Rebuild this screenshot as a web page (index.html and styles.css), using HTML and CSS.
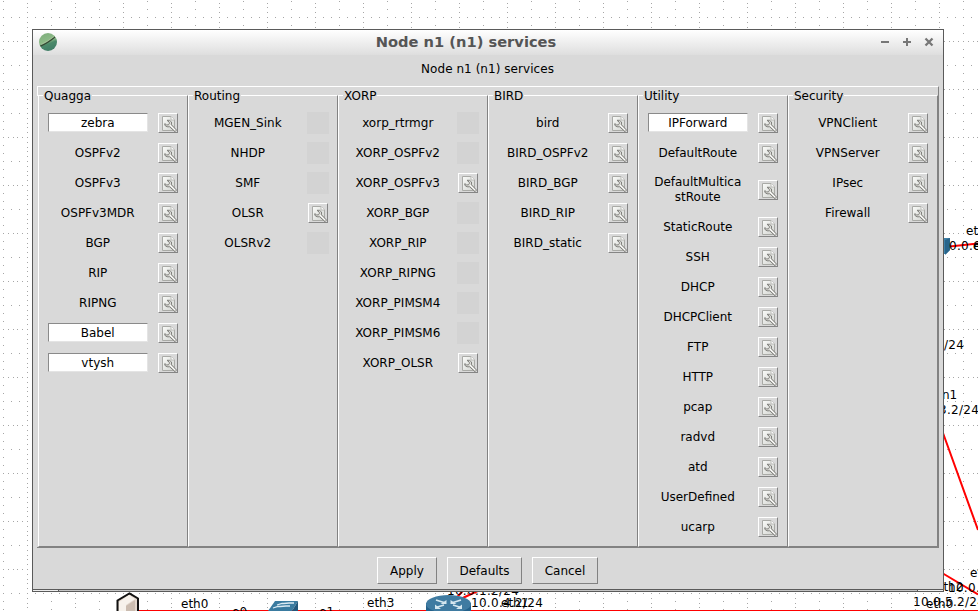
FILE: index.html
```html
<!DOCTYPE html>
<html lang="en">
<head>
<meta charset="utf-8">
<title>Node n1 (n1) services</title>
<link rel="stylesheet" href="styles.css">
</head>
<body>
<svg class="canvas" width="978" height="611" viewBox="0 0 978 611">
  <defs>
    <pattern id="grid" x="3" y="17" width="48" height="48" patternUnits="userSpaceOnUse">
      <path shape-rendering="crispEdges" stroke="#a6a6a6" fill="none" d="M0 .5h1m7 0h1m7 0h1m7 0h1m7 0h1m7 0h1M0 24.5h1m4 0h1m4 0h1m3 0h1m4 0h1m4 0h1m4 0h1m4 0h1m3 0h1m4 0h1M.5 8v1m0 7v1m0 15v1m0 7v1M24.5 5v1m0 4v1m0 3v1m0 4v1m0 9v1m0 4v1m0 3v1m0 4v1"/>
    </pattern>
    <linearGradient id="marble" x1=".3" y1="0" x2=".7" y2="1"><stop offset="0" stop-color="#7fae7c"/><stop offset=".45" stop-color="#8dbb88"/><stop offset=".6" stop-color="#4b8a6a"/><stop offset="1" stop-color="#3f7c66"/></linearGradient>
    <linearGradient id="paper" x1="0" y1="0" x2="1" y2="1"><stop offset="0" stop-color="#fafbf9"/><stop offset="1" stop-color="#d2d4d0"/></linearGradient>
    <symbol id="wrench" viewBox="0 0 16 16">
      <path d="M1.500 .5h8.500l3.500 3.500v10.500h-12z" fill="url(#paper)" stroke="#a9aaa6"/>
      <path d="M10 .5v3.500h3.500" fill="#fff" stroke="#b8b8b4"/>
      <path d="M6 4.300h2.500l2 1.700v2.800l5 5.200-1.500 1.700-5.300-4.900H6L3.800 9.300V7.600l1.700 1.300h1.700L8.300 7.800V6.200z" fill="#dcdcd8" stroke="#80807c"/>
      <path d="M9 9l5.200 5.200" stroke="#fff"/>
    </symbol>
  </defs>
  <rect width="978" height="611" fill="url(#grid)"/>
  <g class="links">
    <path d="M943 433L978 530M943 573.500L978 594.500M945 247L978 243.500M452 603L482 589M452 603L468 585" stroke-width="2"/>
    <path d="M128 610.500H978" stroke-width="1"/>
  </g>
  <path d="M117.500 611V600.500L129.500 593.500l8.500 5V611" fill="#e2d6cc" stroke="#111" stroke-width="2"/>
  <path d="M119 602l10-7 6 4-9 6v6h-7z" fill="#f7f2ec"/>
  <path d="M126 606l9-6v11h-9z" fill="#cbbcb0"/>
  <path d="M268 611l7-10h23l-6 10z" fill="#3a7ba0"/>
  <path d="M292 611l6-10v10z" fill="#22587c"/>
  <path d="M277 605l5-1.500h4m-2 0l5-.5h5m-21 5l5-1.500h4m-2 0l6-.5h4" fill="none" stroke="#dcebf3" stroke-width="1.300"/>
  <path d="M426 603v8h45v-8z" fill="#24618a"/>
  <ellipse cx="448.500" cy="604" rx="22.500" ry="9" fill="#3f7ba1"/>
  <path d="M436 600l8 2.500m17-2.500l-8 2.500M436 607.500l8-2.500m17 2.500l-8-2.500" fill="none" stroke="#d5e7ef" stroke-width="1.800"/>
  <path d="M446.500 600v4h-6zM450.500 600v4h6zM435 604.500v4.500h6zM462 604.500v4.500h-6z" fill="#d5e7ef"/>
  <path d="M935 238h15v12l-4 4h-11z" fill="#3f82a9"/>
  <path d="M945 240l5-2v12l-5 5z" fill="#28658b"/>
  <g class="names">
    <text x="181" y="608">eth0</text>
    <text x="232" y="616">e0</text>
    <text x="319" y="616">e1</text>
    <text x="367" y="607">eth3</text>
    <text x="501" y="607">eth1</text>
    <text x="966" y="235">eth1</text>
    <text x="973" y="250">eth0</text>
    <text x="942" y="399">n1</text>
    <text x="970" y="577">eth1</text>
    <text x="936" y="591">eth2</text>
    <text x="926" y="608">eth0</text>
  </g>
  <g class="names addresses">
    <text x="447" y="595">10.0.1.2/24</text>
    <text x="471" y="607">10.0.4.2/24</text>
    <text x="949" y="250">0.0.6.2/24</text>
    <text x="892" y="349">10.0.3.1/24</text>
    <text x="907" y="414">10.0.3.2/24</text>
    <text x="948" y="592">10.0.7.1/24</text>
    <text x="913" y="606">10.0.5.2/24</text>
  </g>
</svg>

<main class="window">
  <header class="titlebar">
    <svg class="app-icon" width="18" height="18" viewBox="0 0 18 18"><circle cx="9" cy="9" r="9" fill="url(#marble)"/><path d="M1.500 13Q8 10.500 16 4" fill="none" stroke="#354b35" stroke-width="1.600"/><path d="M2 11.500Q8 9 15 3.500" fill="none" stroke="#b2c4a0" stroke-width=".7"/></svg>
    <h1>Node n1 (n1) services</h1>
    <svg class="controls" width="54" height="10" viewBox="0 0 54 10" fill="none" stroke="#777" stroke-width="2"><path d="M1 5h8M23 5h8M27 1v8"/><path d="M45.500 1.500l7 7m0-7l-7 7" stroke-width="2.300"/></svg>
  </header>
  <p class="subtitle">Node n1 (n1) services</p>
  <div class="panel" id="panel"></div>
  <footer class="actions">
    <button class="apply">Apply</button>
    <button class="defaults">Defaults</button>
    <button class="cancel">Cancel</button>
  </footer>
  <div class="grip"></div>
</main>
<script src="services.js"></script>
</body>
</html>
```
FILE: styles.css
```css
* { box-sizing: border-box; }
body {
  margin: 0;
  width: 978px;
  height: 611px;
  overflow: hidden;
  position: relative;
  background: #fff;
  color: #000;
  font: 12px/15px "DejaVu Sans", sans-serif;
}
.canvas { position: absolute; left: 0; top: 0; }
.links { stroke: #f00; fill: none; }
.names { font-size: 12px; }
.addresses { letter-spacing: .3px; }
.window {
  position: absolute;
  left: 32px;
  top: 29px;
  width: 912px;
  height: 563px;
  display: flex;
  flex-direction: column;
  background: #d9d9d9;
  border: 1px solid #5a5a5a;
}
.titlebar {
  flex: none;
  height: 25px;
  display: flex;
  align-items: center;
  padding: 0 9px 2px 6px;
  background: linear-gradient(#fff, #dedede);
}
h1 {
  flex: 1;
  margin: 0 5px 0 0;
  text-align: center;
  font-size: 14.67px;
  line-height: 18px;
  color: #555;
  white-space: nowrap;
}
.subtitle {
  flex: none;
  margin: 0;
  height: 31px;
  padding: 7px 1px 0 0;
  text-align: center;
  letter-spacing: .05px;
}
.panel {
  flex: none;
  display: grid;
  grid-template-columns: repeat(6, 150px);
  width: 902px;
  height: 462px;
  margin-left: 4px;
  padding: 8px 0 0 1px;
  border-top: 1px solid #fff;
  border-right: 1px solid #828282;
  border-bottom: 1px solid #828282;
  background: linear-gradient(#fff, #fff) 0 0 / 1px 9px no-repeat;
}
.group {
  margin: 0;
  min-width: 0;
  border: 1px solid;
  border-color: #fff #828282 #828282 #fff;
}
.group h2 {
  width: fit-content;
  height: 15px;
  margin: -7px 0 4px 4px;
  padding: 0 1px;
  background: #d9d9d9;
  font-size: 12px;
  line-height: 15px;
  font-weight: normal;
}
.row {
  height: 30px;
  display: flex;
  align-items: center;
  padding-left: 9px;
}
.row.tall { height: 44px; }
.name {
  width: 100px;
  height: 20px;
  padding-right: .5px;
  display: flex;
  align-items: center;
  justify-content: center;
  text-align: center;
  white-space: pre;
}
.name.on {
  height: 19px;
  margin-bottom: 1px;
  padding-top: 1px;
  background: #fff;
  border: 1px solid;
  border-color: #8a8a8a #e4e4e4 #e4e4e4 #8a8a8a;
}
.tool {
  width: 20px;
  height: 20px;
  margin-left: 10px;
  padding: 2px 1px 1px 2px;
  border: 1px solid;
  border-color: #fff #858585 #858585 #fff;
}
.tool svg { display: block; }
.blank { width: 22px; height: 22px; margin-left: 9px; background: #d3d3d3; }
.actions {
  flex: none;
  display: flex;
  justify-content: center;
  gap: 10px;
  height: 41px;
  padding-top: 9px;
  margin-right: 1px;
}
button {
  height: 27px;
  padding: 1px 0 0;
  color: #000;
  font: inherit;
  background: #d9d9d9;
  border: 1px solid;
  border-color: #fff #828282 #828282 #fff;
}
.apply { width: 60px; }
.defaults { width: 75px; }
.cancel { width: 66px; }
.grip {
  flex: none;
  height: 2px;
  border-top: 1px solid #5a5a5a;
  background: linear-gradient(90deg, #eee 25px, #5a5a5a 25px, #5a5a5a 26px, #c4c4c4 26px, #c4c4c4 884px, #5a5a5a 884px, #5a5a5a 885px, #eee 885px);
}
```
FILE: services.js
```js
// "+" marks an enabled service, "*" one that has a configuration button.
const groups = {
  Quagga: ["+*zebra", "*OSPFv2", "*OSPFv3", "*OSPFv3MDR", "*BGP", "*RIP", "*RIPNG", "+*Babel", "+*vtysh"],
  Routing: ["MGEN_Sink", "NHDP", "SMF", "*OLSR", "OLSRv2"],
  XORP: ["xorp_rtrmgr", "XORP_OSPFv2", "*XORP_OSPFv3", "XORP_BGP", "XORP_RIP", "XORP_RIPNG", "XORP_PIMSM4", "XORP_PIMSM6", "*XORP_OLSR"],
  BIRD: ["*bird", "*BIRD_OSPFv2", "*BIRD_BGP", "*BIRD_RIP", "*BIRD_static"],
  Utility: ["+*IPForward", "*DefaultRoute", "*DefaultMultica\nstRoute", "*StaticRoute", "*SSH", "*DHCP", "*DHCPClient", "*FTP", "*HTTP", "*pcap", "*radvd", "*atd", "*UserDefined", "*ucarp"],
  Security: ["*VPNClient", "*VPNServer", "*IPsec", "*Firewall"]
};
const row = (entry) => {
  const label = entry.replace(/^\+?\*?/, "");
  const tool = entry.includes("*")
    ? '<div class="tool"><svg width="16" height="16"><use href="#wrench"/></svg></div>'
    : '<div class="blank"></div>';
  return `<div class="row${label.includes("\n") ? " tall" : ""}"><div class="name${entry[0] === "+" ? " on" : ""}">${label}</div>${tool}</div>`;
};
document.getElementById("panel").innerHTML = Object.entries(groups)
  .map(([title, list]) => `<section class="group"><h2>${title}</h2>${list.map(row).join("")}</section>`)
  .join("");
```
